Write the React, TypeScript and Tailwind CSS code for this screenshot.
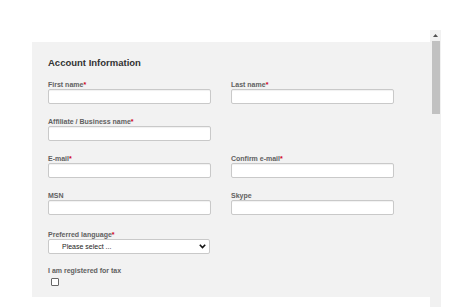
import type { ReactNode } from "react";

const font = { fontFamily: '"Liberation Sans", Arial, sans-serif' };

function Label({ text, required }: { text: string; required?: boolean }) {
  return (
    <div className="h-[9px] text-[7px] leading-[9px] font-bold text-[#616161] whitespace-nowrap">
      {text}
      {required ? <span className="text-[#d0021b]">*</span> : null}
    </div>
  );
}

function TextField({ label, required }: { label: string; required?: boolean }) {
  return (
    <div className="flex flex-col">
      <Label text={label} required={required} />
      <input
        type="text"
        className="h-[15px] w-[163px] rounded-[2px] border border-[#c9c9c9] bg-white shadow-[inset_0_1px_1px_rgba(0,0,0,0.06)] outline-none"
      />
    </div>
  );
}

function Row({ children }: { children: ReactNode }) {
  return <div className="grid grid-cols-[163px_163px] gap-x-[20px]">{children}</div>;
}

export default function App() {
  return (
    <div className="min-h-[307px] w-[474px] bg-white" style={font}>
      <div className="flex pl-[32px] pt-[30px]">
        <div className="w-[398px] pt-[12px]">
          <div className="bg-[#f2f2f2] pl-[16px] pt-[15px] pb-[12px] h-[255px]">
            <h2 className="text-[9.5px] leading-[12px] font-bold text-[#333] mb-[11px]">
              Account Information
            </h2>
            <div className="flex flex-col gap-y-[13px]">
              <Row>
                <TextField label="First name" required />
                <TextField label="Last name" required />
              </Row>
              <Row>
                <TextField label="Affiliate / Business name" required />
              </Row>
              <Row>
                <TextField label="E-mail" required />
                <TextField label="Confirm e-mail" required />
              </Row>
              <Row>
                <TextField label="MSN" />
                <TextField label="Skype" />
              </Row>
              <div className="flex flex-col mt-[2px]">
                <Label text="Preferred language" required />
                <div className="relative h-[15px] w-[162px] rounded-[2px] border border-[#c9c9c9] bg-white">
                  <span className="absolute left-[13px] top-0 text-[7px] leading-[13px] text-[#222]">
                    Please select ...
                  </span>
                  <svg
                    className="absolute right-[3px] top-[4px]"
                    width="7"
                    height="5"
                    viewBox="0 0 7 5"
                  >
                    <path d="M0.8 0.8 L3.5 3.6 L6.2 0.8" fill="none" stroke="#111" strokeWidth="1.6" />
                  </svg>
                </div>
              </div>
              <div className="flex flex-col -mt-[1px]">
                <Label text="I am registered for tax" />
                <div className="ml-[3px] mt-[3px] h-[8px] w-[8px] rounded-[1px] border border-[#666] bg-white" />
              </div>
            </div>
          </div>
        </div>
        <div className="relative h-[277px] w-[11px] bg-[#f1f1f1]">
          <svg className="absolute left-[3px] top-[4px]" width="5" height="3" viewBox="0 0 5 3">
            <path d="M0 3 L2.5 0 L5 3 Z" fill="#505050" />
          </svg>
          <div className="absolute left-[2px] top-[11px] h-[73px] w-[8px] bg-[#c1c1c1]" />
        </div>
      </div>
    </div>
  );
}
